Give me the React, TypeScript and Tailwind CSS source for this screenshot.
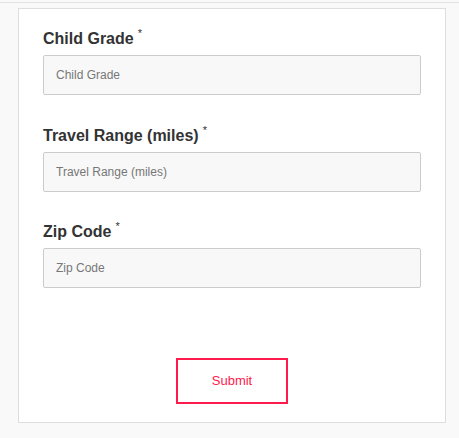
const fields = ['Child Grade', 'Travel Range (miles)', 'Zip Code'];
const gaps = ['', 'mt-[31px]', 'mt-[30px]'];

export default function App() {
  return (
    <div className="min-h-[438px] bg-[#f9f9f9] pt-[2px] font-['Liberation_Sans',Arial,sans-serif]">
      <div className="border-t border-[#e3e3e3] pt-[5px] pl-[18px] pr-[13px] pb-[16px]">
        <form className="flex flex-col border border-[#dedede] bg-white px-[24px] pt-[20px] pb-[18px]">
          {fields.map((label, i) => (
            <div key={label} className={gaps[i]}>
              <label className="flex h-[20px] items-start text-[16px] font-bold leading-[20px] text-[#333]">
                {label}
                <span className="ml-[4px] mt-[-3px] text-[11px] font-normal leading-[14px] text-[#333]">*</span>
              </label>
              <input
                placeholder={label}
                className="mt-[6px] block h-[40px] w-full rounded-[2px] border border-[#cccccc] bg-[#f8f8f8] px-[12px] text-[12px] text-[#555] outline-none placeholder:text-[#777]"
              />
            </div>
          ))}
          <div className="mt-[70px] flex justify-center">
            <button
              type="button"
              className="h-[46px] w-[112px] border-2 border-[#ff1a4d] bg-white text-[13px] text-[#ff1a4d]"
            >
              Submit
            </button>
          </div>
        </form>
      </div>
    </div>
  );
}
